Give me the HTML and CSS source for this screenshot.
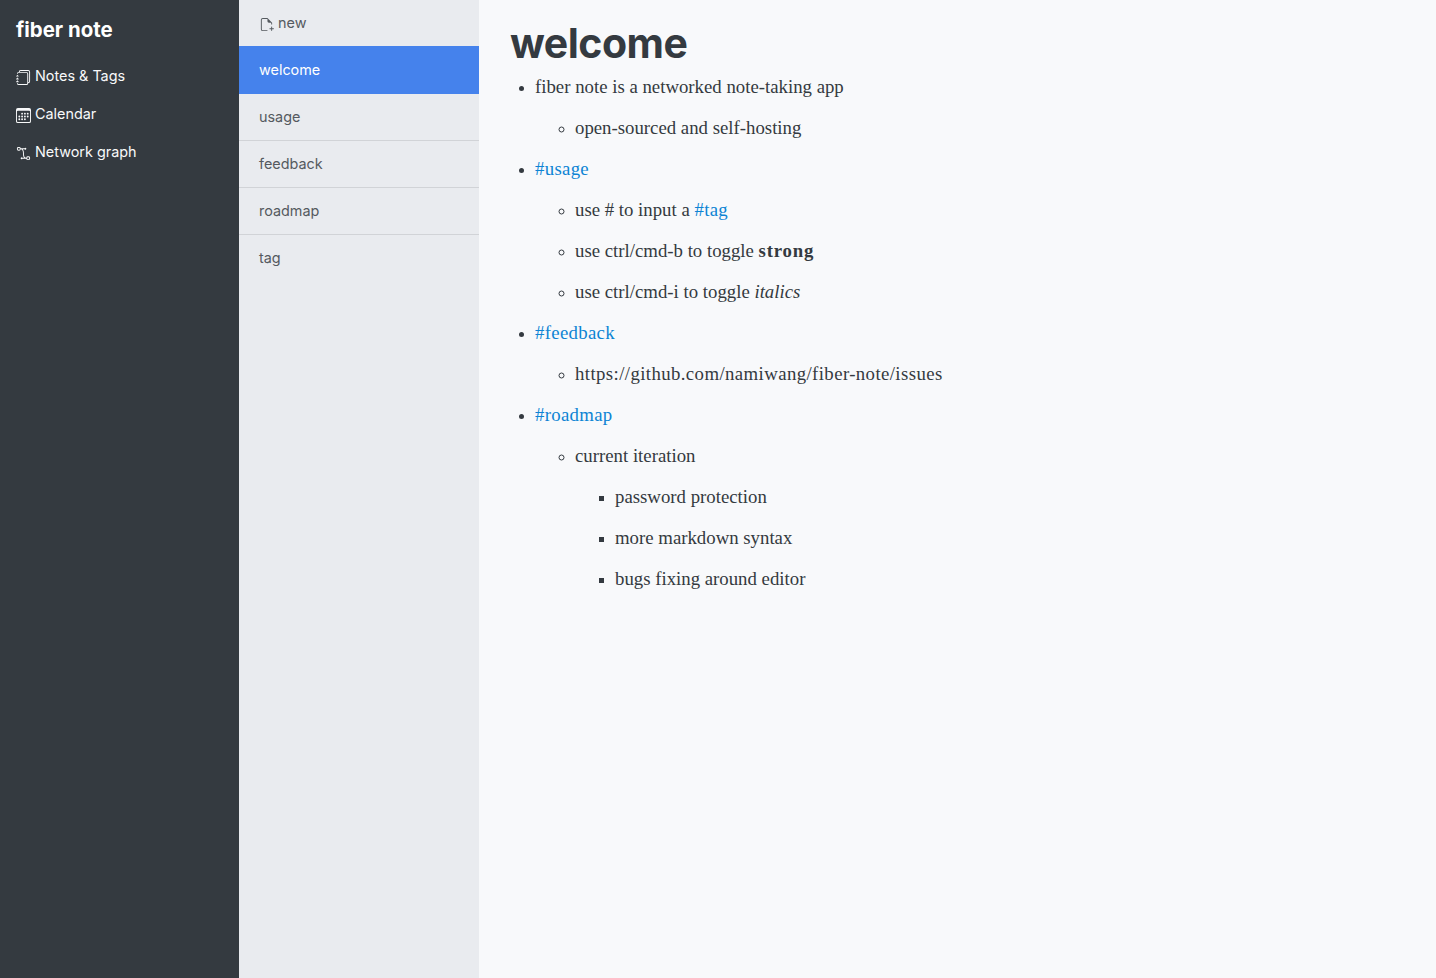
FILE: index.html
```html
<!DOCTYPE html>
<html lang="en">
<head>
    <meta charset="UTF-8">
    <meta name="viewport" content="width=device-width, initial-scale=1.0">
    <title>fiber note</title>
    <link rel="stylesheet" href="styles.css">
</head>
<body>
    <!-- Main navigation -->
    <nav class="sidebar">
        <div class="brand">fiber note</div>
        <a class="nav-item">
            <svg class="nav-icon" viewBox="0 0 16 16" fill="currentColor">
                <path d="M5 0h8a2 2 0 0 1 2 2v10a2 2 0 0 1-2 2 2 2 0 0 1-2 2H3a2 2 0 0 1-2-2h1a1 1 0 0 0 1 1h8a1 1 0 0 0 1-1V4a1 1 0 0 0-1-1H3a1 1 0 0 0-1 1H1a2 2 0 0 1 2-2h8a2 2 0 0 1 2 2v9a1 1 0 0 0 1-1V2a1 1 0 0 0-1-1H5a1 1 0 0 0-1 1H3a2 2 0 0 1 2-2z"/>
                <path d="M1 6v-.5a.5.5 0 0 1 1 0V6h.5a.5.5 0 0 1 0 1h-2a.5.5 0 0 1 0-1H1zm0 3v-.5a.5.5 0 0 1 1 0V9h.5a.5.5 0 0 1 0 1h-2a.5.5 0 0 1 0-1H1zm0 2.500v.5H.5a.5.5 0 0 0 0 1h2a.5.5 0 0 0 0-1H2v-.5a.5.5 0 0 0-1 0z"/>
            </svg>
            Notes &amp; Tags
        </a>
        <a class="nav-item">
            <svg class="nav-icon" viewBox="0 0 16 16" fill="currentColor">
                <path d="M14 0H2a2 2 0 0 0-2 2v12a2 2 0 0 0 2 2h12a2 2 0 0 0 2-2V2a2 2 0 0 0-2-2zM1 3.857C1 3.384 1.448 3 2 3h12c.552 0 1 .384 1 .857v10.286c0 .473-.448.857-1 .857H2c-.552 0-1-.384-1-.857V3.857z"/>
                <path d="M6.500 7a1 1 0 1 0 0-2 1 1 0 0 0 0 2zm3 0a1 1 0 1 0 0-2 1 1 0 0 0 0 2zm3 0a1 1 0 1 0 0-2 1 1 0 0 0 0 2zm-9 3a1 1 0 1 0 0-2 1 1 0 0 0 0 2zm3 0a1 1 0 1 0 0-2 1 1 0 0 0 0 2zm3 0a1 1 0 1 0 0-2 1 1 0 0 0 0 2zm3 0a1 1 0 1 0 0-2 1 1 0 0 0 0 2zm-9 3a1 1 0 1 0 0-2 1 1 0 0 0 0 2zm3 0a1 1 0 1 0 0-2 1 1 0 0 0 0 2zm3 0a1 1 0 1 0 0-2 1 1 0 0 0 0 2z"/>
            </svg>
            Calendar
        </a>
        <a class="nav-item">
            <svg class="nav-icon" viewBox="0 0 16 16" fill="currentColor">
                <path d="M1 2.500A1.500 1.500 0 0 1 2.500 1h1A1.500 1.500 0 0 1 5 2.500h4.134a1 1 0 1 1 0 1h-2.010c.18.18.34.381.484.605.638.992.892 2.354.892 3.895 0 1.993.257 3.092.713 3.700.356.476.895.721 1.787.784A1.500 1.500 0 0 1 12.500 11h1a1.500 1.500 0 0 1 1.500 1.500v1a1.500 1.500 0 0 1-1.500 1.500h-1a1.500 1.500 0 0 1-1.500-1.500H6.866a1 1 0 1 1 0-1h1.711a2.839 2.839 0 0 1-.165-.2C7.743 11.407 7.500 10.007 7.500 8c0-1.460-.246-2.597-.733-3.355-.39-.605-.952-1-1.767-1.112A1.500 1.500 0 0 1 3.500 5h-1A1.500 1.500 0 0 1 1 3.500v-1zM2.500 2a.5.5 0 0 0-.5.5v1a.5.5 0 0 0 .5.5h1a.5.5 0 0 0 .5-.5v-1a.5.5 0 0 0-.5-.5h-1zm10 10a.5.5 0 0 0-.5.5v1a.5.5 0 0 0 .5.5h1a.5.5 0 0 0 .5-.5v-1a.5.5 0 0 0-.5-.5h-1z"/>
            </svg>
            Network graph
        </a>
    </nav>

    <!-- Note list -->
    <section class="note-list">
        <a class="new-note">
            <svg class="new-icon" viewBox="0 0 16 16" fill="currentColor">
                <path d="M9 1H4a2 2 0 0 0-2 2v10a2 2 0 0 0 2 2h5v-1H4a1 1 0 0 1-1-1V3a1 1 0 0 1 1-1h5v2.500A1.500 1.500 0 0 0 10.500 6H13v2h1V6L9 1z"/>
                <path d="M13.500 10a.5.5 0 0 1 .5.5V12h1.500a.5.5 0 0 1 0 1H14v1.500a.5.5 0 0 1-1 0V13h-1.500a.5.5 0 0 1 0-1H13v-1.500a.5.5 0 0 1 .5-.5z"/>
            </svg>
            new
        </a>
        <a class="note-item active">welcome</a>
        <a class="note-item">usage</a>
        <a class="note-item">feedback</a>
        <a class="note-item">roadmap</a>
        <a class="note-item">tag</a>
    </section>

    <!-- Note content -->
    <main class="editor">
        <h1 class="note-title">welcome</h1>
        <ul class="note-body">
            <li>fiber note is a networked note-taking app
                <ul>
                    <li>open-sourced and self-hosting</li>
                </ul>
            </li>
            <li><a class="tag">#usage</a>
                <ul>
                    <li>use # to input a <a class="tag">#tag</a></li>
                    <li>use ctrl/cmd-b to toggle <strong>strong</strong></li>
                    <li>use ctrl/cmd-i to toggle <em>italics</em></li>
                </ul>
            </li>
            <li><a class="tag">#feedback</a>
                <ul>
                    <li class="note-url">https://github.com/namiwang/fiber-note/issues</li>
                </ul>
            </li>
            <li><a class="tag">#roadmap</a>
                <ul>
                    <li>current iteration
                        <ul>
                            <li>password protection</li>
                            <li>more markdown syntax</li>
                            <li>bugs fixing around editor</li>
                        </ul>
                    </li>
                </ul>
            </li>
        </ul>
    </main>
</body>
</html>
```

FILE: styles.css
```css
/* Global Styling */
* {
    margin: 0;
    padding: 0;
    box-sizing: border-box;
}

body {
    display: flex;
    height: 100vh;
    overflow: hidden;
    font-family: "Inter", "Liberation Sans", sans-serif;
    background: #f8f9fb;
}

/* Main navigation */
.sidebar {
    width: 239px;
    flex-shrink: 0;
    padding: 16px 16px 0;
    background: #343a40;
    color: #f8f9fa;
}

.brand {
    font-size: 20.400px;
    font-weight: 700;
    line-height: 28px;
    margin-bottom: 13px;
    color: #ffffff;
}

.nav-item {
    display: flex;
    align-items: center;
    gap: 4px;
    height: 38px;
    font-size: 14.400px;
    line-height: 38px;
}

.nav-icon {
    width: 15px;
    height: 15px;
    margin-top: 3px;
}

/* Note list */
.note-list {
    width: 240px;
    flex-shrink: 0;
    background: #e9ebef;
    font-size: 14.400px;
    color: #555a5f;
}

.new-note {
    display: flex;
    align-items: center;
    gap: 4px;
    height: 46px;
    padding: 0 0 2px 20px;
}

.new-icon {
    width: 15px;
    height: 15px;
    margin-top: 4px;
}

.note-item {
    display: flex;
    align-items: center;
    height: 47px;
    padding: 0 0 2px 20px;
    border-bottom: 1px solid #d1d3d7;
}

.note-item:last-child {
    border-bottom: none;
}

.note-item.active {
    height: 48px;
    background: #4582ec;
    color: #ffffff;
    border-bottom: none;
}

/* Note content */
.editor {
    flex: 1;
    padding: 16px 32px;
    color: #343a40;
}

.note-title {
    font-size: 41px;
    font-weight: 700;
    line-height: 54px;
    letter-spacing: -0.500px;
    margin-left: -1px;
    margin-bottom: 4px;
}

.note-body {
    padding-left: 24px;
    font-family: "Liberation Serif", serif;
    font-size: 18.800px;
    line-height: 25px;
}

.note-body ul {
    padding-left: 40px;
}

.note-body li {
    margin-top: 16px;
}

.note-body li::marker {
    font-size: 15.500px;
}

.note-body > li:first-child {
    margin-top: 0;
}

.note-body strong {
    letter-spacing: 0.800px;
}

.note-url {
    letter-spacing: 0.400px;
}

.tag {
    color: #0d84d4;
    letter-spacing: 0.300px;
}
```
